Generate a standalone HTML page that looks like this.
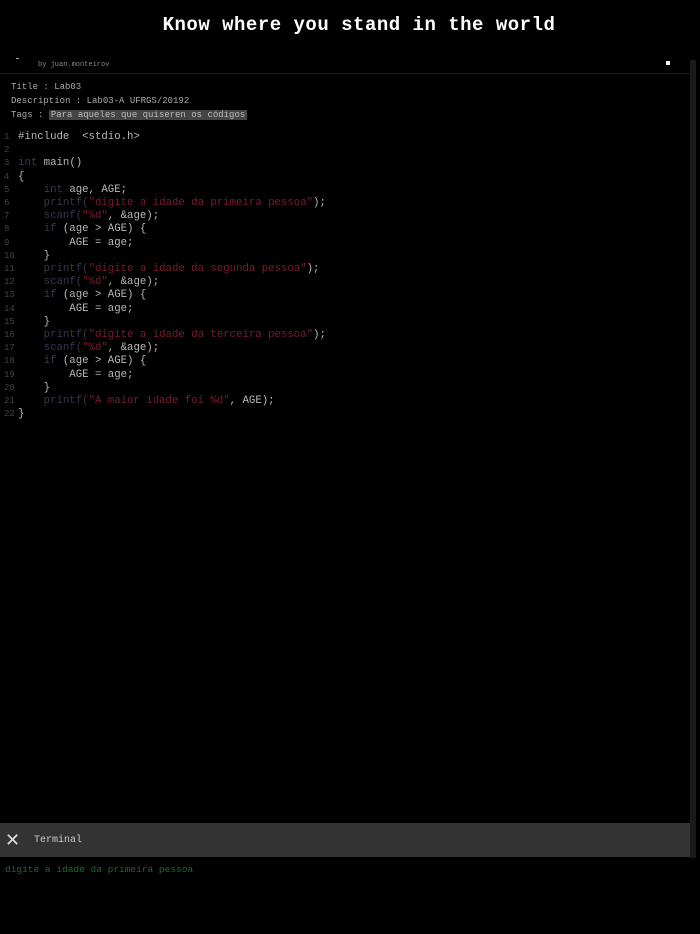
<!DOCTYPE html>
<html><head><meta charset="utf-8"><style>
body{margin:0;width:700px;height:934px;background:#000;overflow:hidden;font-family:"Liberation Mono",monospace;position:relative}
.hdr{position:absolute;top:14px;left:9px;width:700px;text-align:center;color:#fff;font-size:19px;font-weight:bold;letter-spacing:0.5px}
.by{position:absolute;left:38px;top:61px;font-size:7px;color:#888}
.dot0{position:absolute;left:16px;top:58px;width:3px;height:1px;background:#aaa}
.line{position:absolute;left:0;top:73px;width:690px;height:1px;background:#1d1d1d}
.wd{position:absolute;left:666px;top:61px;width:4px;height:4px;background:#eee}
.rb{position:absolute;left:690px;top:60px;width:6px;height:798px;background:#1a1a1a}
.meta{position:absolute;left:11px;top:80px;font-size:9px;color:#aaa;line-height:14px}
.tag{background:#444;color:#bbb;padding:0 2px}
.code{position:absolute;left:4px;top:131px;font-size:10.7px;line-height:13.2px;color:#b8b8b8;white-space:pre}
.n{color:#444;display:inline-block;width:14px;font-size:9px}
.k{color:#433550}.s{color:#7a1c2e}.f{color:#3a3550}
.term{position:absolute;left:0;top:823px;width:690px;height:34px;background:#333}
.x{position:absolute;left:5px;top:7px;color:#ddd;font-size:18px;font-family:"DejaVu Sans",sans-serif}
.tt{position:absolute;left:34px;top:12px;color:#ccc;font-size:10px}
.out{position:absolute;left:5px;top:864px;color:#1e6b2e;font-size:9.5px}
</style></head><body>
<div class="hdr">Know where you stand in the world</div>
<div class="dot0"></div><div class="by">by juan.monteirov</div><div class="wd"></div>
<div class="line"></div><div class="rb"></div>
<div class="meta">Title : Lab03<br>Description : Lab03-A UFRGS/20192<br>Tags : <span class="tag">Para aqueles que quiseren os códigos</span></div>
<div class="code"><span class="n">1</span>#include  &lt;stdio.h&gt;
<span class="n">2</span>
<span class="n">3</span><span class="k">int</span> main()
<span class="n">4</span>{
<span class="n">5</span>    <span class="k">int</span> age, AGE;
<span class="n">6</span>    <span class="f">printf(</span><span class="s">"digite a idade da primeira pessoa"</span>);
<span class="n">7</span>    <span class="f">scanf(</span><span class="s">"%d"</span>, &amp;age);
<span class="n">8</span>    <span class="k">if</span> (age &gt; AGE) {
<span class="n">9</span>        AGE = age;
<span class="n">10</span>    }
<span class="n">11</span>    <span class="f">printf(</span><span class="s">"digite a idade da segunda pessoa"</span>);
<span class="n">12</span>    <span class="f">scanf(</span><span class="s">"%d"</span>, &amp;age);
<span class="n">13</span>    <span class="k">if</span> (age &gt; AGE) {
<span class="n">14</span>        AGE = age;
<span class="n">15</span>    }
<span class="n">16</span>    <span class="f">printf(</span><span class="s">"digite a idade da terceira pessoa"</span>);
<span class="n">17</span>    <span class="f">scanf(</span><span class="s">"%d"</span>, &amp;age);
<span class="n">18</span>    <span class="k">if</span> (age &gt; AGE) {
<span class="n">19</span>        AGE = age;
<span class="n">20</span>    }
<span class="n">21</span>    <span class="f">printf(</span><span class="s">"A maior idade foi %d"</span>, AGE);
<span class="n">22</span>}</div>
<div class="term"><div class="x">✕</div><div class="tt">Terminal</div></div>
<div class="out">digite a idade da primeira pessoa</div>
</body></html>
